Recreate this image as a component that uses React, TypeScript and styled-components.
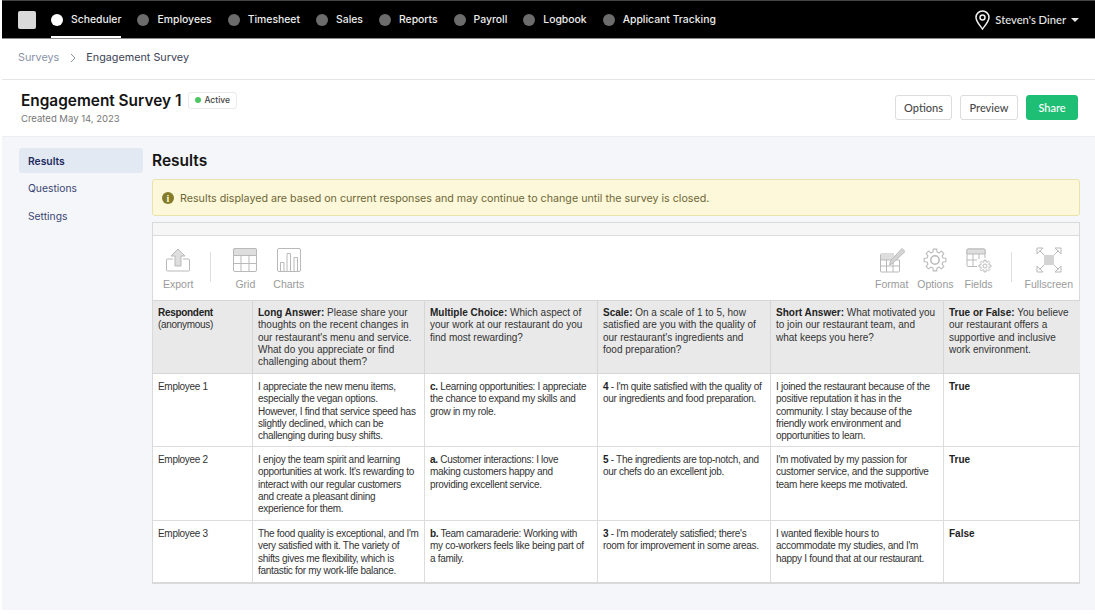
// Survey results page: top nav, survey header, side menu and pivot table
import React from 'react';
import styled, { createGlobalStyle } from 'styled-components';

const GlobalStyle = createGlobalStyle`
  html, body {
    margin: 0;
    padding: 0;
    background: #fff;
  }
  * {
    box-sizing: border-box;
  }
`;

const Page = styled.div`
  width: 1095px;
  height: 614px;
  padding: 0 0 4px 2px;
  overflow: hidden;
  font-family: Inter, 'Liberation Sans', sans-serif;
  background: #fff;
`;

const Shell = styled.div`
  height: 100%;
  background: #f5f6fa;
`;

const NavBar = styled.nav`
  display: flex;
  align-items: center;
  height: 39px;
  padding: 0 16px 0 16px;
  background: #000;
  border-top: 1px solid #444;
  border-bottom: 1px solid #8a8a8a;
`;

const Logo = styled.div`
  width: 18px;
  height: 18px;
  margin-right: 15px;
  border-radius: 2px;
  background: #d9d9d9;
`;

const NavItem = styled.div<{ $active?: boolean }>`
  display: flex;
  align-items: center;
  gap: 8px;
  height: 100%;
  margin-right: 16px;
  font-size: 10.4px;
  font-weight: 500;
  color: #ededed;
  box-shadow: ${(p) => (p.$active ? 'inset 0 -2px 0 #fff' : 'none')};

  &::before {
    content: '';
    width: 12px;
    height: 12px;
    border-radius: 50%;
    background: ${(p) => (p.$active ? '#fff' : '#6c6c6c')};
  }
`;

const Location = styled.div`
  display: flex;
  align-items: center;
  gap: 5px;
  margin-left: auto;
  font-family: Lato, sans-serif;
  font-size: 11.2px;
  font-weight: 500;
  color: #e8e8e8;
`;

const Caret = styled.span`
  width: 0;
  height: 0;
  border-left: 4px solid transparent;
  border-right: 4px solid transparent;
  border-top: 4px solid #e8e8e8;
`;

const Breadcrumbs = styled.div`
  display: flex;
  align-items: center;
  height: 41px;
  padding: 0 16px 3px;
  font-size: 10.8px;
  color: #3b4256;
  background: #fff;
  border-bottom: 1px solid #e6e6e8;
`;

const CrumbLink = styled.span`
  color: #8a93a8;
`;

const CrumbArrow = styled.svg`
  width: 8px;
  height: 10px;
  margin: 0 9.5px;
`;

const SurveyHeader = styled.header`
  display: flex;
  align-items: center;
  justify-content: space-between;
  height: 57px;
  padding: 0 17px 2px 19px;
  background: #fff;
  border-bottom: 1px solid #eceef2;
`;

const TitleRow = styled.div`
  display: flex;
  align-items: center;
  gap: 7px;
`;

const SurveyTitle = styled.h1`
  margin: 0;
  font-size: 15.4px;
  font-weight: 600;
  color: #141414;
`;

const Badge = styled.span`
  display: flex;
  align-items: center;
  gap: 3px;
  height: 17px;
  padding: 0 6px;
  font-size: 8.5px;
  font-weight: 500;
  color: #444;
  background: #fff;
  border: 1px solid #eaeaea;
  border-radius: 3px;

  &::before {
    content: '';
    width: 6px;
    height: 6px;
    border-radius: 50%;
    background: #4cc764;
  }
`;

const Created = styled.div`
  margin-top: 3px;
  font-size: 9.5px;
  color: #777;
`;

const Actions = styled.div`
  display: flex;
  gap: 8px;
`;

const Button = styled.button<{ $primary?: boolean; $width: number }>`
  width: ${(p) => p.$width}px;
  height: 25px;
  padding: 0;
  font-family: Lato, sans-serif;
  font-size: 11px;
  font-weight: 500;
  color: ${(p) => (p.$primary ? '#fff' : '#4a4a4a')};
  background: ${(p) => (p.$primary ? '#1fbe75' : '#fff')};
  border: 1px solid ${(p) => (p.$primary ? '#1fbe75' : '#dcdcdc')};
  border-radius: 3px;
`;

const Content = styled.div`
  display: flex;
  padding: 11px 15px 0 17px;
`;

const SideMenu = styled.aside`
  display: flex;
  flex-direction: column;
  flex: none;
  width: 124px;
  margin-right: 9px;
`;

const MenuItem = styled.div<{ $active?: boolean }>`
  display: flex;
  align-items: center;
  height: 25px;
  margin-bottom: 2.5px;
  padding-left: 9px;
  font-size: 10.3px;
  font-weight: ${(p) => (p.$active ? 600 : 400)};
  color: ${(p) => (p.$active ? '#1d2b5e' : '#3a4672')};
  background: ${(p) => (p.$active ? '#e3e9f3' : 'transparent')};
  border-radius: 3px;
`;

const Main = styled.main`
  display: flex;
  flex-direction: column;
  flex: 1;
  min-width: 0;
`;

const MainTitle = styled.h2`
  display: flex;
  align-items: center;
  height: 25px;
  margin: 0 0 6px;
  font-size: 15.5px;
  font-weight: 600;
  color: #141414;
`;

const Alert = styled.div`
  display: flex;
  align-items: center;
  gap: 6px;
  height: 37px;
  margin-bottom: 6px;
  padding: 1px 9px 0;
  font-size: 10.7px;
  color: #6d6738;
  background: #fdf8d9;
  border: 1px solid #e9e2ad;
  border-radius: 3px;
`;

const AlertDot = styled.span`
  display: flex;
  align-items: center;
  justify-content: center;
  width: 12px;
  height: 12px;
  font-family: 'Liberation Serif', serif;
  font-size: 10px;
  font-weight: 700;
  color: #fdf8d9;
  background: #857c2b;
  border-radius: 50%;
`;

const Pivot = styled.section`
  border: 1px solid #d9d9d9;
  border-bottom-width: 2px;
  background: #fff;
`;

const PivotStrip = styled.div`
  height: 13px;
  background: #f6f6f6;
  border-bottom: 1px solid #dcdcdc;
`;

const Toolbar = styled.div`
  display: flex;
  align-items: flex-start;
  height: 64px;
  padding: 11px 6px 0 10px;
  font-family: 'Liberation Sans', Arial, sans-serif;
`;

const ToolGroup = styled.div<{ $push?: boolean }>`
  display: flex;
  margin-left: ${(p) => (p.$push ? 'auto' : '0')};
`;

const Tool = styled.div<{ $gap?: number }>`
  display: flex;
  flex-direction: column;
  align-items: center;
  margin-left: ${(p) => p.$gap ?? 0}px;
  font-size: 10.5px;
  line-height: 12px;
  color: #9a9a9a;

  svg {
    display: block;
    width: 26px;
    height: 26px;
    margin-bottom: 5px;
  }
`;

const ToolDivider = styled.div<{ $left: number; $right: number }>`
  width: 1px;
  height: 30px;
  margin: 5px ${(p) => p.$right}px 0 ${(p) => p.$left}px;
  background: #dedede;
`;

const Table = styled.table`
  width: 100%;
  table-layout: fixed;
  border-collapse: collapse;
  font-family: 'Liberation Sans', Arial, sans-serif;
  font-size: 10px;
  line-height: 12.3px;
  color: #333;

  tr > *:first-child {
    border-left: 0;
    padding-left: 5px;
  }
  tr > *:last-child {
    border-right: 0;
  }
  tbody tr:last-child > * {
    border-bottom: 0;
  }
`;

const HeadCell = styled.th<{ $tight?: boolean }>`
  height: 73px;
  padding: 6px 2px 0 5.5px;
  text-align: left;
  vertical-align: top;
  font-weight: 400;
  white-space: pre-line;
  letter-spacing: ${(p) => (p.$tight ? '-0.3px' : '0')};
  background: #e9e9e9;
  border: 1px solid #d6d6d6;
`;

const Cell = styled.td<{ $height: number }>`
  height: ${(p) => p.$height}px;
  padding: 7px 1px 0 5.5px;
  vertical-align: top;
  white-space: pre-line;
  letter-spacing: -0.3px;
  border: 1px solid #dcdcdc;
`;

const Strong = styled.b`
  font-weight: 700;
  color: #222;
`;

const BoolValue = styled.b`
  font-weight: 700;
  letter-spacing: 0;
  color: #222;
`;

// builds a toothed wheel outline for the gear icons
const gearPath = (cx: number, cy: number, outer: number, inner: number, teeth: number) => {
  const step = (Math.PI * 2) / teeth;
  const points: string[] = [];
  for (let i = 0; i < teeth; i++) {
    const a = i * step - Math.PI / 2;
    const corners: [number, number][] = [
      [inner, a - step * 0.32],
      [outer, a - step * 0.2],
      [outer, a + step * 0.2],
      [inner, a + step * 0.32],
    ];
    corners.forEach(([r, t]) => {
      points.push(`${(cx + r * Math.cos(t)).toFixed(2)} ${(cy + r * Math.sin(t)).toFixed(2)}`);
    });
  }
  return `M${points.join('L')}Z`;
};

const ExportIcon = () => (
  <svg viewBox="0 0 26 26" fill="none" stroke="#b9b9b9" strokeWidth="1">
    <path d="M8 12H2.500a1 1 0 0 0-1 1v10a1 1 0 0 0 1 1h21a1 1 0 0 0 1-1V13a1 1 0 0 0-1-1H18" />
    <path d="M13 2l7 7h-4v10h-6V9H6z" fill="#dedede" />
  </svg>
);

const GridIcon = () => (
  <svg viewBox="0 0 26 26" fill="none" stroke="#b9b9b9" strokeWidth="1">
    <rect x="1.500" y="1.500" width="23" height="23" rx="1.500" />
    <path d="M1.500 3a1.500 1.500 0 0 1 1.500-1.500h20A1.500 1.500 0 0 1 24.500 3v5.500h-23z" fill="#dedede" />
    <path d="M1.500 16.500h23M9 8.500v16M17 8.500v16" />
  </svg>
);

const ChartsIcon = () => (
  <svg viewBox="0 0 26 26" fill="none" stroke="#b9b9b9" strokeWidth="1">
    <rect x="1.500" y="1.500" width="23" height="23" rx="1.500" />
    <path d="M4.500 24.500v-9H8v9M11 24.500V6.500h3.500v18M18 24.500V10.500h3.500v14" />
  </svg>
);

const FormatIcon = () => (
  <svg viewBox="0 0 26 26" fill="none" stroke="#b9b9b9" strokeWidth="1">
    <path d="M15 7H2.500a1 1 0 0 0-1 1v16a1 1 0 0 0 1 1h17a1 1 0 0 0 1-1V13" />
    <path d="M2 7.500h13.500v5.500H2z" fill="#dedede" stroke="none" />
    <path d="M1.500 13h19M1.500 19h19M7.500 13v12M14 13v12" />
    <path d="M10.500 18l1-4L23 1.500 26 4.500 14 16z" fill="#d4d4d4" />
  </svg>
);

const GearIcon = () => (
  <svg viewBox="0 0 26 26" fill="none" stroke="#b9b9b9" strokeWidth="1.100" strokeLinejoin="round">
    <path d={gearPath(13, 13, 11, 8.200, 8)} />
    <circle cx="13" cy="13" r="4.200" strokeWidth="1.500" />
  </svg>
);

const FieldsIcon = () => (
  <svg viewBox="0 0 26 26" fill="none" stroke="#b9b9b9" strokeWidth="1">
    <path d="M11 19.500H2a1 1 0 0 1-1-1V3a1 1 0 0 1 1-1h16a1 1 0 0 1 1 1v8" />
    <path d="M1 3a1 1 0 0 1 1-1h16a1 1 0 0 1 1 1v4H1z" fill="#dedede" />
    <path d="M1 13h10M7 7v12.500M13 7v5" />
    <path d={gearPath(19, 19, 6, 4.300, 8)} fill="#fff" />
    <circle cx="19" cy="19" r="2" />
  </svg>
);

const FullscreenIcon = () => (
  <svg viewBox="0 0 26 26" fill="none" stroke="#b9b9b9" strokeWidth="1">
    <rect x="8" y="8" width="10" height="10" fill="#d4d4d4" stroke="none" />
    <path d="M1 7V1h6zM25 7V1h-6zM1 19v6h6zM25 19v6h-6z" />
    <path d="M3.500 3.500L8 8M22.500 3.500L18 8M3.500 22.500L8 18M22.500 22.500L18 18" />
  </svg>
);

const PinIcon = () => (
  <svg width="15" height="20" viewBox="0 0 15 20" fill="none" stroke="#f0f0f0" strokeWidth="1.500">
    <path d="M7.500 19C5 15.500 1 11.500 1 7.500a6.500 6.500 0 0 1 13 0C14 11.500 10 15.500 7.500 19z" />
    <circle cx="7.500" cy="7.500" r="2.500" />
  </svg>
);

const navItems = ['Scheduler', 'Employees', 'Timesheet', 'Sales', 'Reports', 'Payroll', 'Logbook', 'Applicant Tracking'];

const columnWidths = [99, 172, 173, 173, 173, 137];

const questions = [
  ['Long Answer:', " Please share your\nthoughts on the recent changes in\nour restaurant's menu and service.\nWhat do you appreciate or find\nchallenging about them?"],
  ['Multiple Choice:', ' Which aspect of\nyour work at our restaurant do you\nfind most rewarding?'],
  ['Scale:', " On a scale of 1 to 5, how\nsatisfied are you with the quality of\nour restaurant's ingredients and\nfood preparation?"],
  ['Short Answer:', ' What motivated you\nto join our restaurant team, and\nwhat keeps you here?'],
  ['True or False:', ' You believe\nour restaurant offers a\nsupportive and inclusive\nwork environment.'],
];

const rows = [
  {
    name: 'Employee 1',
    height: 73,
    long: 'I appreciate the new menu items,\nespecially the vegan options.\nHowever, I find that service speed has\nslightly declined, which can be\nchallenging during busy shifts.',
    choice: ['c.', ' Learning opportunities: I appreciate\nthe chance to expand my skills and\ngrow in my role.'],
    scale: ['4', " - I'm quite satisfied with the quality of\nour ingredients and food preparation."],
    short: 'I joined the restaurant because of the\npositive reputation it has in the\ncommunity. I stay because of the\nfriendly work environment and\nopportunities to learn.',
    bool: 'True',
  },
  {
    name: 'Employee 2',
    height: 74,
    long: "I enjoy the team spirit and learning\nopportunities at work. It's rewarding to\ninteract with our regular customers\nand create a pleasant dining\nexperience for them.",
    choice: ['a.', ' Customer interactions: I love\nmaking customers happy and\nproviding excellent service.'],
    scale: ['5', ' - The ingredients are top-notch, and\nour chefs do an excellent job.'],
    short: "I'm motivated by my passion for\ncustomer service, and the supportive\nteam here keeps me motivated.",
    bool: 'True',
  },
  {
    name: 'Employee 3',
    height: 61,
    long: "The food quality is exceptional, and I'm\nvery satisfied with it. The variety of\nshifts gives me flexibility, which is\nfantastic for my work-life balance.",
    choice: ['b.', ' Team camaraderie: Working with\nmy co-workers feels like being part of\na family.'],
    scale: ['3', " - I'm moderately satisfied; there's\nroom for improvement in some areas."],
    short: "I wanted flexible hours to\naccommodate my studies, and I'm\nhappy I found that at our restaurant.",
    bool: 'False',
  },
];

const App: React.FC = () => (
  <Page>
    <GlobalStyle />
    <Shell>
      <NavBar>
        <Logo />
        {navItems.map((item, i) => (
          <NavItem key={item} $active={i === 0}>
            {item}
          </NavItem>
        ))}
        <Location>
          <PinIcon />
          Steven's Diner
          <Caret />
        </Location>
      </NavBar>

      <Breadcrumbs>
        <CrumbLink>Surveys</CrumbLink>
        <CrumbArrow viewBox="0 0 8 10" fill="none" stroke="#8a93a8" strokeWidth="1">
          <path d="M2 1l4 4-4 4" />
        </CrumbArrow>
        Engagement Survey
      </Breadcrumbs>

      <SurveyHeader>
        <div>
          <TitleRow>
            <SurveyTitle>Engagement Survey 1</SurveyTitle>
            <Badge>Active</Badge>
          </TitleRow>
          <Created>Created May 14, 2023</Created>
        </div>
        <Actions>
          <Button $width={57}>Options</Button>
          <Button $width={58}>Preview</Button>
          <Button $width={52} $primary>
            Share
          </Button>
        </Actions>
      </SurveyHeader>

      <Content>
        <SideMenu>
          <MenuItem $active>Results</MenuItem>
          <MenuItem>Questions</MenuItem>
          <MenuItem>Settings</MenuItem>
        </SideMenu>

        <Main>
          <MainTitle>Results</MainTitle>
          <Alert>
            <AlertDot>i</AlertDot>
            Results displayed are based on current responses and may continue to change until the survey is closed.
          </Alert>

          <Pivot>
            <PivotStrip />
            <Toolbar>
              <ToolGroup>
                <Tool>
                  <ExportIcon />
                  Export
                </Tool>
                <ToolDivider $left={17} $right={21} />
                <Tool>
                  <GridIcon />
                  Grid
                </Tool>
                <Tool $gap={15}>
                  <ChartsIcon />
                  Charts
                </Tool>
              </ToolGroup>
              <ToolGroup $push>
                <Tool>
                  <FormatIcon />
                  Format
                </Tool>
                <Tool $gap={9}>
                  <GearIcon />
                  Options
                </Tool>
                <Tool $gap={11}>
                  <FieldsIcon />
                  Fields
                </Tool>
                <ToolDivider $left={18} $right={13} />
                <Tool>
                  <FullscreenIcon />
                  Fullscreen
                </Tool>
              </ToolGroup>
            </Toolbar>
            <Table>
              <colgroup>
                {columnWidths.map((w, i) => (
                  <col key={i} width={w} />
                ))}
              </colgroup>
              <thead>
                <tr>
                  <HeadCell $tight>
                    <Strong>Respondent</Strong>
                    <br />
                    (anonymous)
                  </HeadCell>
                  {questions.map(([label, text]) => (
                    <HeadCell key={label}>
                      <Strong>{label}</Strong>
                      {text}
                    </HeadCell>
                  ))}
                </tr>
              </thead>
              <tbody>
                {rows.map((row) => (
                  <tr key={row.name}>
                    <Cell $height={row.height}>{row.name}</Cell>
                    <Cell $height={row.height}>{row.long}</Cell>
                    <Cell $height={row.height}>
                      <Strong>{row.choice[0]}</Strong>
                      {row.choice[1]}
                    </Cell>
                    <Cell $height={row.height}>
                      <Strong>{row.scale[0]}</Strong>
                      {row.scale[1]}
                    </Cell>
                    <Cell $height={row.height}>{row.short}</Cell>
                    <Cell $height={row.height}>
                      <BoolValue>{row.bool}</BoolValue>
                    </Cell>
                  </tr>
                ))}
              </tbody>
            </Table>
          </Pivot>
        </Main>
      </Content>
    </Shell>
  </Page>
);

export default App;
